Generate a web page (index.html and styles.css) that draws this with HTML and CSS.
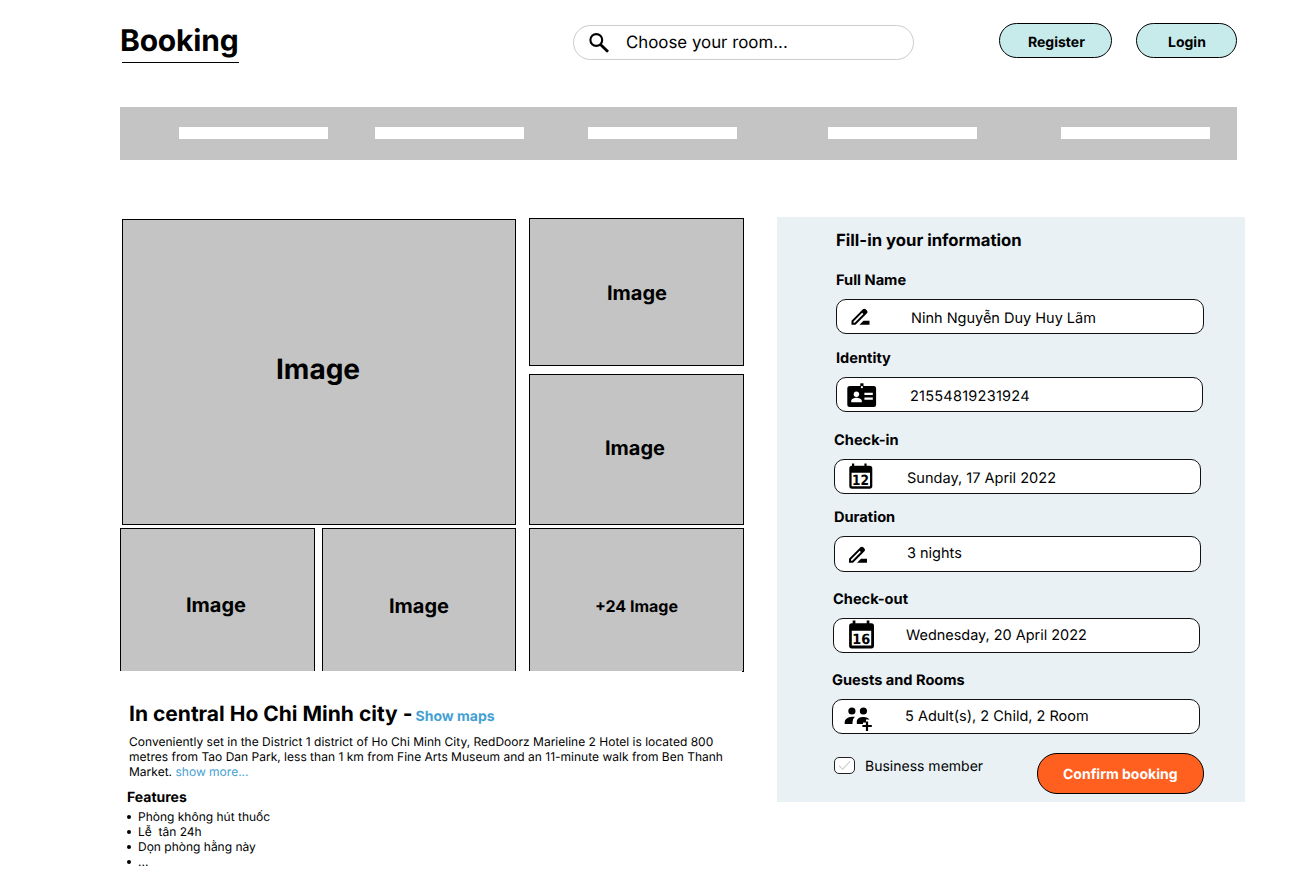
FILE: index.html
```html
<!DOCTYPE html>
<html lang="en">
<head>
<meta charset="utf-8">
<title>Booking</title>
<link rel="stylesheet" href="styles.css">
</head>
<body>
<header class="header">
  <div class="logo">Booking</div>
  <div class="search">
    <svg class="search-icon" viewBox="0 0 22 22"><circle cx="8.3" cy="8" r="5.9" fill="none" stroke="#000" stroke-width="2.1"/><path d="M12.2 12.2L20 19.8" stroke="#000" stroke-width="2.8"/></svg>
    <span>Choose your room...</span>
  </div>
  <a class="pill register">Register</a>
  <a class="pill login">Login</a>
</header>

<nav class="nav"><i></i><i></i><i></i><i></i><i></i></nav>

<main class="main">
  <div class="left">
    <section class="gallery">
      <div class="wide">
        <div class="tile hero"><span>Image</span></div>
        <div class="pair">
          <div class="tile open one"><span>Image</span></div>
          <div class="tile open two"><span>Image</span></div>
        </div>
      </div>
      <div class="side">
        <div class="tile top"><span>Image</span></div>
        <div class="tile mid"><span>Image</span></div>
        <div class="tile open more"><span>+24 Image</span></div>
      </div>
    </section>
    <section class="about">
      <h1>In central Ho Chi Minh city - <a class="maps">Show maps</a></h1>
      <p>Conveniently set in the District 1 district of Ho Chi Minh City, RedDoorz Marieline 2 Hotel is located 800<br>metres from Tao Dan Park, less than 1 km from Fine Arts Museum and an 11-minute walk from Ben Thanh<br>Market. <a>show more...</a></p>
      <h2>Features</h2>
      <ul>
        <li>Phòng không hút thuốc</li>
        <li>Lễ&nbsp; tân 24h</li>
        <li>Dọn phòng hằng này</li>
        <li>...</li>
      </ul>
    </section>
  </div>

  <form class="panel">
    <h2>Fill-in your information</h2>
    <div class="field name">
      <label>Full Name</label>
      <div class="box">
        <svg viewBox="0 0 44 35"><path transform="translate(12.5 5.7)" d="M18.41 5.8L17.2 4.59c-.78-.78-2.05-.78-2.83 0l-2.68 2.68L3 15.96V20h4.04l8.74-8.74 2.63-2.63c.79-.78.79-2.05 0-2.83zM6.21 18H5v-1.21l8.66-8.66 1.21 1.21L6.21 18zM11 20l4-4h6v4H11z"/></svg>
        <span>Ninh Nguyễn Duy Huy Lãm</span>
      </div>
    </div>
    <div class="field identity">
      <label>Identity</label>
      <div class="box">
        <svg viewBox="0 0 44 35"><rect x="11.3" y="9" width="28.8" height="21" rx="2.5"/><path d="M24.3 6.3h3.2v4.2h-3.2z"/><g fill="#fff"><circle cx="25.9" cy="10.2" r="1.1"/><circle cx="20.4" cy="17.3" r="2.7"/><path d="M15.2 25.2v-1.4c0-2 3.2-3.1 5.2-3.1s5.4 1.1 5.4 3.1v1.4zM28.4 15.8h8.4v2.1h-8.4zM28.4 20.6h8.4v2.1h-8.4z"/></g></svg>
        <span>21554819231924</span>
      </div>
    </div>
    <div class="field checkin">
      <label>Check-in</label>
      <div class="box">
        <svg viewBox="0 0 44 35"><path fill-rule="evenodd" d="M18 6.8v-2.4h2.2v2.4h10.2v-2.4h2.2v2.4h3q2.7 0 2.7 2.7v17.6q0 2.6-2.7 2.6h-17.6q-2.7 0-2.7-2.6v-17.6q0-2.7 2.7-2.7zM17.6 13.7v13.6h18.4v-13.6z"/><text class="day" x="18" y="25.6" textLength="17" lengthAdjust="spacingAndGlyphs">12</text></svg>
        <span>Sunday, 17 April 2022</span>
      </div>
    </div>
    <div class="field duration">
      <label>Duration</label>
      <div class="box">
        <svg viewBox="0 0 44 35"><path transform="translate(12 6.7)" d="M18.41 5.8L17.2 4.59c-.78-.78-2.05-.78-2.83 0l-2.68 2.68L3 15.96V20h4.04l8.74-8.74 2.63-2.63c.79-.78.79-2.05 0-2.83zM6.21 18H5v-1.21l8.66-8.66 1.21 1.21L6.21 18zM11 20l4-4h6v4H11z"/></svg>
        <span>3 nights</span>
      </div>
    </div>
    <div class="field checkout">
      <label>Check-out</label>
      <div class="box">
        <svg viewBox="0 0 44 35"><path fill-rule="evenodd" d="M19.7 5.2v-2.7h2.7v2.7h11.3v-2.7h2.7v2.7h2q2.6 0 2.6 2.6v19.9q0 2.7-2.6 2.7h-19.6q-2.7 0-2.7-2.7v-19.9q0-2.6 2.7-2.6zM18.8 12.8v14.6h19.4v-14.6z"/><text class="day" x="19.3" y="25.8" textLength="18" lengthAdjust="spacingAndGlyphs">16</text></svg>
        <span>Wednesday, 20 April 2022</span>
      </div>
    </div>
    <div class="field guests">
      <label>Guests and Rooms</label>
      <div class="box">
        <svg viewBox="0 0 44 35"><circle cx="19.9" cy="12" r="3.6"/><circle cx="31.4" cy="12" r="3.6"/><path d="M12.7 25v-1.7c0-3.8 4.2-5.8 10.3-5.5q-2.5 2-2.5 5.2v2zM24.8 25v-2.4c0-4.4 7-5.5 11-3.6l1.8 1.6h-3.6v3h-3v1.4z"/><path d="M35 22.5v9.4M30.4 27h9.4" stroke="#000" stroke-width="2.2"/></svg>
        <span>5 Adult(s), 2 Child, 2 Room</span>
      </div>
    </div>
    <div class="actions">
      <div class="check"><svg viewBox="0 0 21 17"><path d="M5 8.7l3.7 3.5 7.5-8" fill="none" stroke="#d2d2d2" stroke-width="1.2"/></svg></div>
      <span class="member">Business member</span>
      <a class="confirm">Confirm booking</a>
    </div>
  </form>
</main>
</body>
</html>
```
FILE: styles.css
```css
* { box-sizing: border-box; }
body { margin: 0; width: 1313px; height: 896px; overflow: hidden; background: #fff; color: #000; font-family: Inter, sans-serif; text-rendering: geometricPrecision; }
h1, h2, p, ul { margin: 0; padding: 0; }

.header { display: flex; height: 107px; padding-left: 120px; }
.logo { width: 119px; height: 63px; padding-top: 23px; font-size: 30px; font-weight: 700; line-height: 37px; letter-spacing: -0.2px; white-space: nowrap; background: linear-gradient(#000, #000) 2px 62px / 117px 1px no-repeat; }
.search { display: flex; width: 341px; height: 35px; margin: 25px 0 0 334px; border: 1px solid #ccc; border-radius: 18px; font-size: 16.85px; line-height: 34px; }
.search-icon { width: 22px; height: 22px; margin: 6px 16px 0 14px; }
.pill { height: 35px; margin-top: 23px; border: 1px solid #000; border-radius: 18px; background: #c7ebeb; font-size: 14px; font-weight: 700; line-height: 37px; }
.register { width: 113px; margin-left: 85px; padding-left: 28px; }
.login { width: 101px; margin-left: 24px; padding-left: 31px; }

.nav { display: flex; width: 1117px; height: 53px; margin-left: 120px; padding: 20px 0 0 59px; background: #c4c4c4; }
.nav i { width: 149px; height: 12px; background: #fff; }
.nav i:nth-child(2) { margin-left: 47px; }
.nav i:nth-child(3) { margin-left: 64px; }
.nav i:nth-child(4) { margin-left: 91px; }
.nav i:nth-child(5) { margin-left: 84px; }

.main { display: flex; padding: 57px 0 0 120px; }
.left { width: 657px; padding-top: 1px; }
.gallery { display: flex; gap: 13px; }
.wide { width: 396px; padding-top: 1px; }
.tile { display: flex; border: 1px solid #000; background: #c4c4c4; font-size: 20px; font-weight: 700; line-height: 24px; }
.open { height: 143px; border-bottom: 0; }
.hero { height: 306px; margin-left: 2px; padding: 132px 0 0 153px; font-size: 28px; line-height: 34px; }
.pair { display: flex; gap: 7px; margin-top: 3px; }
.one { width: 195px; padding: 64px 0 0 65px; }
.two { width: 194px; padding: 65px 0 0 66px; }
.side { width: 215px; }
.top { height: 148px; padding: 62px 0 0 77px; }
.mid { height: 151px; margin: 8px 0 3px; padding: 61px 0 0 75px; }
.more { position: relative; padding: 65px 0 0 65px; font-size: 16px; }
.more::after { content: ""; position: absolute; right: -1px; bottom: -1px; width: 2px; height: 1px; background: #000; }

.about { padding: 30px 0 0 7px; }
.about h1 { height: 27px; padding-left: 2px; font-size: 21px; line-height: 27px; white-space: nowrap; }
.about a { color: #459fd3; }
.about .maps { font-size: 14px; margin-left: -2px; }
.about p { padding: 6px 0 0 2px; font-size: 12px; line-height: 15px; letter-spacing: 0.01px; white-space: nowrap; }
.about h2 { margin-top: 10px; font-size: 14px; line-height: 18px; }
.about ul { margin-top: 2px; list-style: none; font-size: 12px; line-height: 15px; }
.about li { display: flex; align-items: center; gap: 7px; }
.about li::before { content: ""; width: 4px; height: 4px; border-radius: 50%; background: #000; }

.panel { width: 468px; height: 585px; padding: 14px 0 0 55px; background: #e9f1f5; }
.panel h2 { padding-left: 4px; font-size: 16.7px; line-height: 20px; }
.field label { display: block; height: 28px; font-size: 14.6px; font-weight: 700; line-height: 18px; }
.box { display: flex; width: 367px; height: 35px; border: 1px solid #111; border-radius: 10px; background: #fff; font-size: 14.5px; line-height: 37px; }
.box svg { flex: none; width: 44px; height: 35px; margin: -1px 0 0 -1px; }
.box span { margin-left: 31px; white-space: nowrap; }
.day { font-family: "DejaVu Sans", sans-serif; font-size: 14px; font-weight: 700; }
.name { margin: 20px 0 0 4px; }
.name .box, .guests .box { width: 368px; }
.identity { margin: 15px 0 0 4px; }
.identity span { margin-left: 30px; letter-spacing: 0.25px; }
.checkin { margin: 19px 0 0 2px; }
.checkin span { margin-left: 29px; font-size: 14.55px; }
.duration { margin: 14px 0 0 2px; }
.duration .box { height: 36px; }
.duration span { margin-left: 29px; line-height: 34px; }
.checkout { margin: 18px 0 0 1px; }
.checkout span { margin-left: 29px; line-height: 33px; font-size: 14.45px; }
.guests { margin: 18px 0 0; }
.guests span { line-height: 33px; margin-left: 29px; }
.actions { display: flex; margin-top: 19px; padding-left: 2px; }
.check { width: 21px; height: 17px; margin-top: 4px; border: 1px solid #222; border-radius: 5px; background: #fff; }
.check svg { display: block; width: 21px; height: 17px; margin: -1px; }
.member { width: 172px; margin-left: 10px; font-size: 14px; line-height: 27px; }
.confirm { width: 167px; height: 41px; border: 1px solid #000; border-radius: 20px; background: #ff5f1f; color: #fff; font-size: 14px; font-weight: 700; line-height: 41px; padding-left: 25px; }
```
